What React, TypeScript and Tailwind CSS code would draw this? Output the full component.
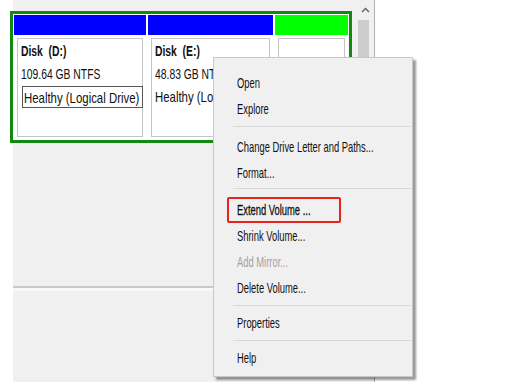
import React from "react";

function Sq({ children, className = "" }: { children: React.ReactNode; className?: string }) {
  return (
    <span className={"inline-block origin-left scale-x-[0.625] whitespace-nowrap " + className}>{children}</span>
  );
}

function Pt({ children, className = "" }: { children: React.ReactNode; className?: string }) {
  return (
    <span className={"inline-block origin-left scale-x-[0.69] whitespace-nowrap " + className}>{children}</span>
  );
}

function Ph({ children }: { children: React.ReactNode }) {
  return <span className="inline-block origin-left scale-x-[0.76] whitespace-nowrap">{children}</span>;
}

function Item({ label, disabled = false }: { label: string; disabled?: boolean }) {
  return (
    <div className={"h-[26px] flex items-center pl-[23px] text-[15px] " + (disabled ? "text-[#a2a2a2]" : "text-[#111]")}>
      <Sq>{label}</Sq>
    </div>
  );
}

function Sep() {
  return <div className="h-px ml-[19px] mr-px bg-[#d9d9d9]" />;
}

export default function App() {
  return (
    <div className="relative w-[529px] h-[386px] bg-white overflow-hidden font-['Liberation_Sans',Arial,sans-serif]">
      <div className="ml-[13px] w-[362px] h-[382px] bg-[#f0f0f0] border-r border-[#b0b0b0] flex flex-col">
        <div className="h-[286px] flex">
          <div className="flex-1 pt-[11px]">
            <div className="-ml-[3px] w-[342px] h-[132px] border-[3px] border-[#128a12] bg-white p-px flex gap-[2px]">
              {/* D: */}
              <div className="w-[132px] flex flex-col">
                <div className="h-[20px] bg-[#0000ff]" />
                <div className="flex-1 pt-[3px] px-[3px] pb-[2px]">
                  <div className="h-full border border-[#c4c4c4] pl-[3px] text-[15px] leading-[23px] text-[#111]">
                    <div><Pt className="font-bold">Disk&nbsp; (D:)</Pt></div>
                    <div><Pt>109.64 GB NTFS</Pt></div>
                    <div className="ml-px w-[121px] h-[22px] border border-[#555] flex items-center pl-[1px] mt-[1px]">
                      <Ph>Healthy (Logical Drive)</Ph>
                    </div>
                  </div>
                </div>
              </div>
              {/* E: */}
              <div className="w-[125px] flex flex-col">
                <div className="h-[20px] bg-[#0000ff]" />
                <div className="flex-1 pt-[3px] px-[3px] pb-[2px]">
                  <div className="h-full border border-[#c4c4c4] pl-[3px] text-[15px] leading-[23px] text-[#111] overflow-hidden">
                    <div><Pt className="font-bold">Disk&nbsp; (E:)</Pt></div>
                    <div><Pt>48.83 GB NTFS</Pt></div>
                    <div><Ph>Healthy (Logical Drive)</Ph></div>
                  </div>
                </div>
              </div>
              {/* unallocated */}
              <div className="w-[73px] flex flex-col">
                <div className="h-[20px] bg-[#00ff00]" />
                <div className="flex-1 pt-[3px] px-[3px] pb-[2px]">
                  <div className="h-full border border-[#c4c4c4]" />
                </div>
              </div>
            </div>
          </div>
          {/* scrollbar */}
          <div className="w-[17px] flex flex-col items-start">
            <div className="h-[20px] w-full flex items-center justify-center">
              <svg width="9" height="6" viewBox="0 0 9 6">
                <path d="M1 5 L4.5 1.5 L8 5" fill="none" stroke="#606060" strokeWidth="1.4" />
              </svg>
            </div>
            <div className="ml-px w-[11px] h-[110px] bg-[#cdcdcd]" />
          </div>
        </div>
        <div className="h-[2px] bg-[#c9c9c9]" />
        <div className="h-[3px] bg-[#f8f8f8]" />
        <div className="flex-1" />
      </div>

      {/* context menu */}
      <div className="absolute left-[213px] top-[57px] w-[200px] h-[320px] bg-[#f0f0f0] border border-[#c8c8c8] shadow-[3px_3px_2px_rgba(0,0,0,0.4)] flex flex-col">
        <div className="h-[12px]" />
        <Item label="Open" />
        <Item label="Explore" />
        <div className="h-[4px]" />
        <Sep />
        <div className="h-[7px]" />
        <Item label="Change Drive Letter and Paths..." />
        <Item label="Format..." />
        <div className="h-[2px]" />
        <Sep />
        <div className="h-[8px]" />
        <div className="ml-[13px] w-[114px] h-[26px] border-2 border-[#e5231b] rounded-[2px] flex items-center pl-[8px] text-[15px] text-[#111]">
          <Sq className="[-webkit-text-stroke:0.3px_#111]">Extend Volume ...</Sq>
        </div>
        <Item label="Shrink Volume..." />
        <Item label="Add Mirror..." disabled />
        <Item label="Delete Volume..." />
        <div className="h-[4px]" />
        <Sep />
        <div className="h-[4px]" />
        <Item label="Properties" />
        <div className="h-[4px]" />
        <Sep />
        <div className="h-[4px]" />
        <Item label="Help" />
      </div>
    </div>
  );
}
